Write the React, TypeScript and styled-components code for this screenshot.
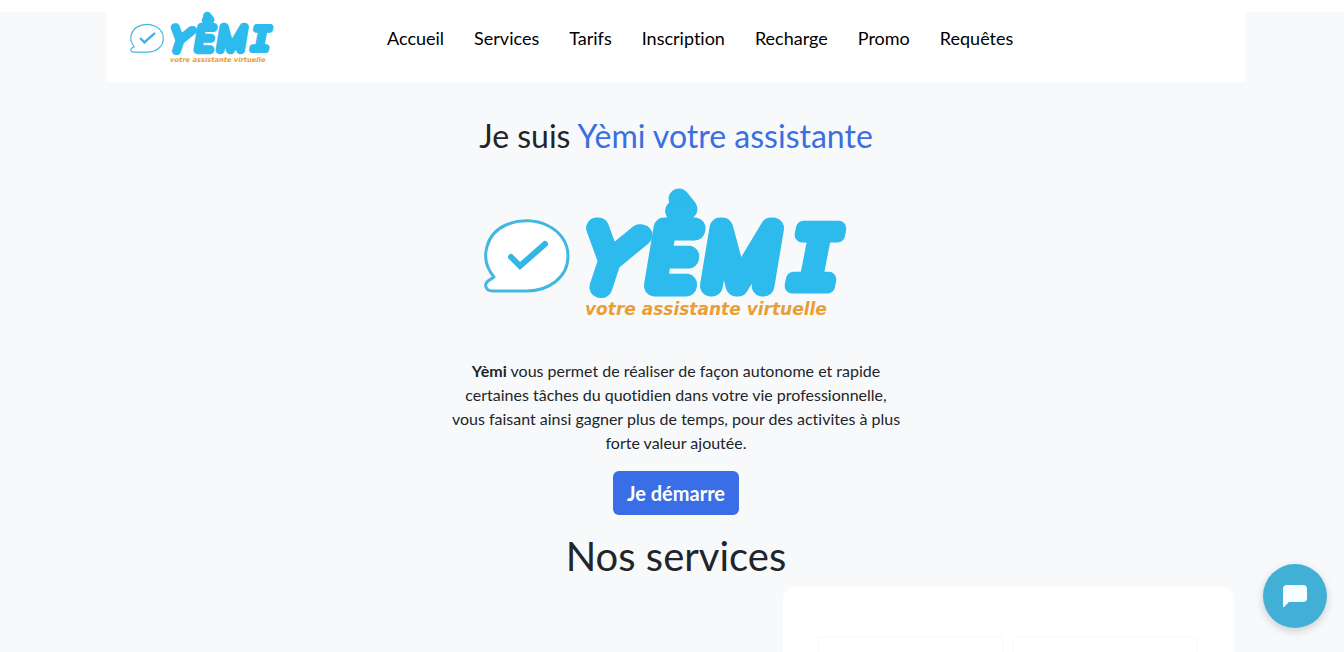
import React from "react";
import styled, { createGlobalStyle } from "styled-components";

const GlobalStyle = createGlobalStyle`
  *, *::before, *::after { box-sizing: border-box; }
  body {
    margin: 0;
    background: #f8f9fb;
    color: #212529;
    font-family: Lato, "Noto Sans", sans-serif;
    font-size: 16px;
    font-variant-ligatures: none;
    line-height: 24px;
  }
`;

const Page = styled.div`
  min-height: 100vh;
  display: flex;
  flex-direction: column;
  border-top: 12px solid #fff;
  padding-left: 8px;
`;

const Container = styled.div`
  width: 100%;
  max-width: 1140px;
  margin: 0 auto;
  flex: 1;
  display: flex;
  flex-direction: column;
`;

const Header = styled.header`
  display: flex;
  align-items: flex-start;
  height: 70px;
  padding-left: 21px;
  background: #fff;
`;

const Brand = styled.a`
  display: block;
  width: 158px;
  height: 58px;
  margin-top: -4px;
`;

const Nav = styled.nav`
  display: flex;
  gap: 30px;
  margin-left: 102px;
  padding-top: 14px;
`;

const NavLink = styled.a`
  color: #000;
  font-size: 18px;
  text-decoration: none;
  white-space: nowrap;
`;

const Hero = styled.main`
  display: flex;
  flex-direction: column;
  align-items: center;
  padding-top: 34px;
  text-align: center;
`;

const Title = styled.h1`
  margin: 0;
  font-size: 32px;
  font-weight: 400;
  line-height: 40px;
`;

const Accent = styled.span`
  color: #3b6fe0;
`;

const HeroLogo = styled.div`
  width: 400px;
  max-width: 100%;
  height: 145px;
  margin: 24px 0 34px;
`;

const Intro = styled.p`
  width: 456px;
  max-width: 100%;
  margin: 0 0 16px;
`;

const StartButton = styled.button`
  height: 44px;
  padding: 0 14px;
  border: 0;
  border-radius: 6px;
  background: #396ee6;
  color: #fff;
  font: inherit;
  font-size: 20px;
  font-weight: 700;
  cursor: pointer;
`;

const SectionTitle = styled.h2`
  margin: 17px 0 7px;
  font-size: 40px;
  font-weight: 400;
  line-height: 48px;
  text-align: center;
`;

const Services = styled.section`
  flex: 1;
  display: flex;
  justify-content: flex-end;
  padding: 0 12px;
`;

const ServicePanel = styled.div`
  flex: 0 1 451px;
  display: grid;
  grid-template-columns: 1fr 1fr;
  gap: 8px;
  padding: 49px 36px 0 34px;
  border-radius: 12px 12px 0 0;
  background: #fff;
`;

const ServiceCard = styled.div`
  border: 2px solid #fbfbfb;
  border-bottom: 0;
  border-radius: 4px 4px 0 0;
`;

const ChatButton = styled.button`
  position: fixed;
  right: 17px;
  bottom: 24px;
  width: 64px;
  height: 64px;
  display: grid;
  place-items: center;
  padding: 0;
  border: 0;
  border-radius: 50%;
  background: #42afd6;
  box-shadow: 0 3px 8px rgba(0, 0, 0, 0.18);
  cursor: pointer;
`;

const Lettering = styled.text`
  font-family: Inter, sans-serif;
  font-size: 80px;
  font-style: italic;
  font-weight: 100;
  fill: #2dbaec;
  stroke: #2dbaec;
  stroke-width: 21px;
  stroke-linejoin: round;
`;

const SlabLettering = styled(Lettering)`
  font-family: "Liberation Mono", monospace;
  font-size: 88px;
  font-weight: 400;
  stroke-width: 15px;
`;

const Tagline = styled.text`
  font-family: "DejaVu Sans", sans-serif;
  font-size: 17px;
  font-style: italic;
  font-weight: 700;
  fill: #e99e36;
`;

const Logo = () => (
  <svg width="100%" height="100%" viewBox="0 0 400 145" role="img" aria-label="Yèmi">
    <path
      d="M18 97C2 78 11 53 30 45C58 33 92 48 92 76C92 98 72 111 51 111H17C9 111 8 104 12 101Z"
      fill="#fff"
      stroke="#42b7e0"
      strokeWidth="3"
      strokeLinejoin="round"
    />
    <path d="M35 77l9 9 25-22" fill="none" stroke="#35b5e5" strokeWidth="6" strokeLinecap="round" />
    <Lettering x="103" y="104" rotate="9">Y</Lettering>
    <path d="M203 19l8 10" stroke="#2dbaec" strokeWidth="21" strokeLinecap="round" />
    <Lettering x="173" y="106">È</Lettering>
    <Lettering x="229" y="106">M</Lettering>
    <SlabLettering x="312" y="106">I</SlabLettering>
    <Tagline x="109" y="135">votre assistante virtuelle</Tagline>
  </svg>
);

const links = ["Accueil", "Services", "Tarifs", "Inscription", "Recharge", "Promo", "Requêtes"];

export default function App() {
  return (
    <>
      <GlobalStyle />
      <Page>
        <Container>
          <Header>
            <Brand href="#">
              <Logo />
            </Brand>
            <Nav>
              {links.map((label) => (
                <NavLink key={label} href="#">
                  {label}
                </NavLink>
              ))}
            </Nav>
          </Header>
          <Hero>
            <Title>
              Je suis <Accent>Yèmi votre assistante</Accent>
            </Title>
            <HeroLogo>
              <Logo />
            </HeroLogo>
            <Intro>
              <strong>Yèmi</strong> vous permet de réaliser de façon autonome et rapide certaines
              tâches du quotidien dans votre vie professionnelle, vous faisant ainsi gagner plus de
              temps, pour des activites à plus forte valeur ajoutée.
            </Intro>
            <StartButton type="button">Je démarre</StartButton>
          </Hero>
          <SectionTitle>Nos services</SectionTitle>
          <Services>
            <ServicePanel>
              <ServiceCard />
              <ServiceCard />
            </ServicePanel>
          </Services>
        </Container>
        <ChatButton type="button" aria-label="Chat">
          <svg width="24" height="24" viewBox="0 0 24 24" fill="#f7feff">
            <path d="M4 1h16a4 4 0 0 1 4 4v9a4 4 0 0 1-4 4H6l-5 5H0V5a4 4 0 0 1 4-4z" />
          </svg>
        </ChatButton>
      </Page>
    </>
  );
}
